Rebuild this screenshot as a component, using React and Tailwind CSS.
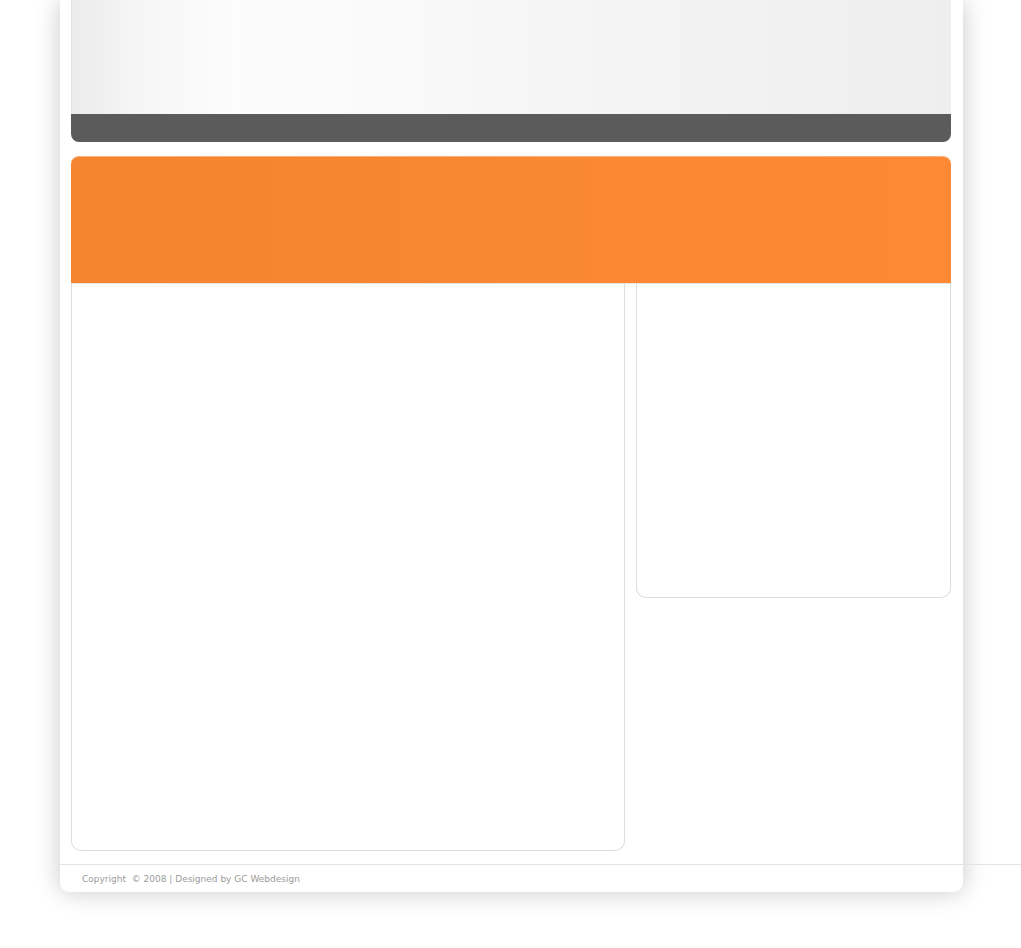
import React from "react";

export default function App() {
  return (
    <div className="min-h-screen bg-white pb-[56px]" style={{ fontFamily: '"DejaVu Sans", Verdana, sans-serif' }}>
      <div className="relative ml-[60px] w-[903px] rounded-b-[9px] bg-white shadow-[0_0_24px_rgba(0,0,0,0.22)]">
        <div className="ml-[11px] w-[880px]">
          {/* header */}
          <div className="overflow-hidden rounded-b-[8px]">
            <div className="h-[114px] border-l border-[#e2e2e2] bg-[linear-gradient(to_right,#ebebeb_0%,#f6f6f6_8%,#fcfcfc_18%,#fafafa_35%,#f5f5f5_55%,#f2f2f2_75%,#eeeeee_100%)]" />
            <div className="h-[28px] bg-[#5b5b5b]" />
          </div>

          {/* banner */}
          <div className="mt-[14px] h-[127px] rounded-t-[8px] border-t border-[#f6b07c] bg-[linear-gradient(to_right,#f4842f_0%,#f88633_40%,#fc8834_70%,#fd8934_100%)]" />

          {/* body */}
          <div className="flex items-start gap-[11px] border-t border-[#e4e4e4]">
            <div className="h-[567px] w-[554px] rounded-b-[10px] border border-t-0 border-[#dedede]" />
            <div className="h-[314px] w-[315px] rounded-b-[10px] border border-t-0 border-[#dedede]" />
          </div>
        </div>

        {/* footer */}
        <div className="mt-[13px] w-[961px] border-t border-[#e4e4e4]">
          <p className="pl-[22px] pt-[8px] pb-[7px] text-[9px] leading-[12px] text-[#9a9a9a]">
            Copyright&nbsp; © 2008 | Designed by GC Webdesign
          </p>
        </div>
      </div>
    </div>
  );
}
